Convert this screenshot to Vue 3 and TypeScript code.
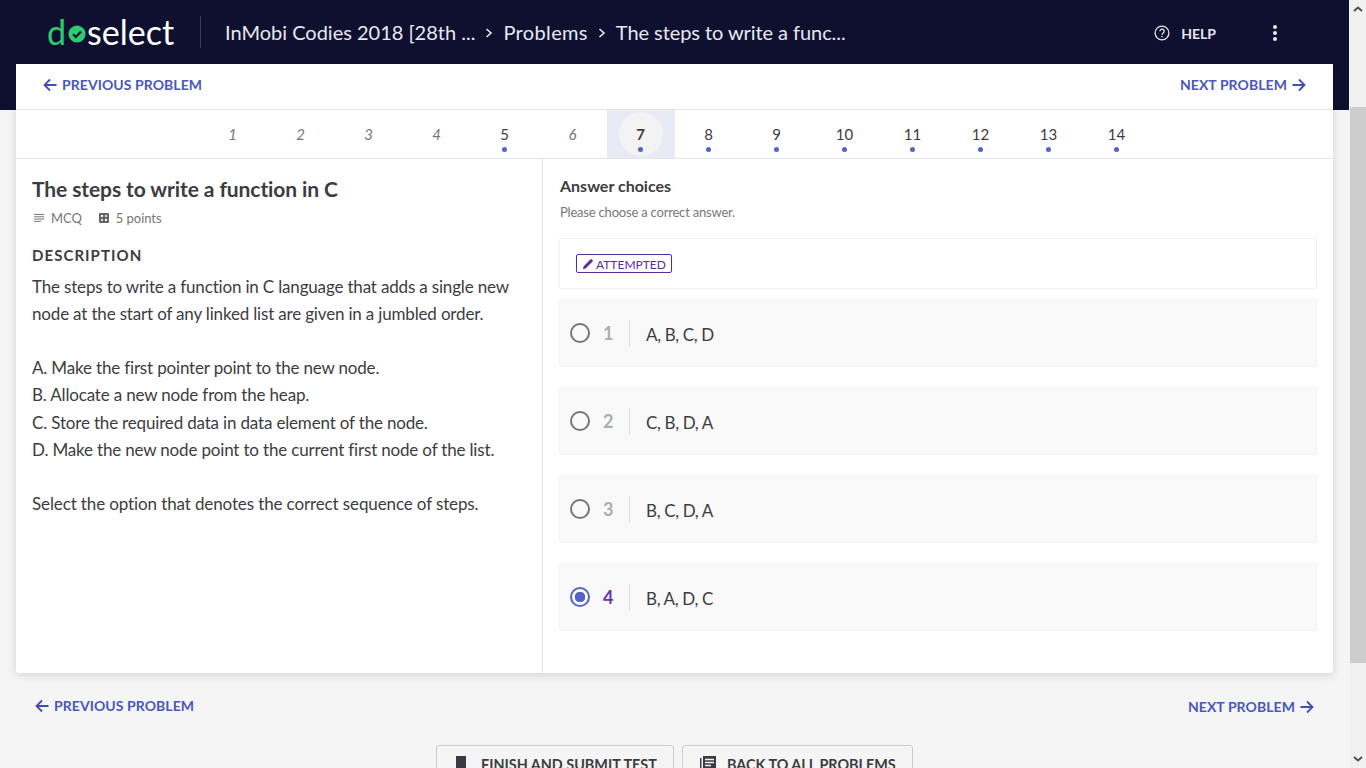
<template>
  <div class="page">
    <div class="viewport">
      <header class="topbar">
        <div class="logo">
          <span class="logo-d">d</span>
          <svg class="logo-o" viewBox="0 0 20 20" width="18" height="18">
            <circle cx="10" cy="10" r="9.5" fill="#2ecc71" />
            <path d="M5.6 10.2l3.1 3.1 5.8-6.2" fill="none" stroke="#0f1030" stroke-width="2.4" />
          </svg>
          <span class="logo-rest">select</span>
        </div>
        <div class="crumbs">
          <span>InMobi Codies 2018 [28th ...</span>
          <svg class="crumb-sep" viewBox="0 0 10 12" width="10" height="12"><path d="M2.5 2l4.5 4-4.5 4" fill="none" stroke="#e8e8f0" stroke-width="1.6" /></svg>
          <span class="crumb-mid">Problems</span>
          <svg class="crumb-sep" viewBox="0 0 10 12" width="10" height="12"><path d="M2.5 2l4.5 4-4.5 4" fill="none" stroke="#e8e8f0" stroke-width="1.6" /></svg>
          <span class="crumb-last">The steps to write a func...</span>
        </div>
        <div class="help">
          <svg viewBox="0 0 16 16" width="16" height="16">
            <circle cx="8" cy="8" r="6.9" fill="none" stroke="#e8e8f0" stroke-width="1.3" />
            <path d="M5.9 6.3a2.1 2.1 0 1 1 3.3 1.7c-.8.5-1.2.9-1.2 1.8" fill="none" stroke="#e8e8f0" stroke-width="1.3" />
            <rect x="7.3" y="10.9" width="1.4" height="1.4" fill="#e8e8f0" />
          </svg>
          <span>HELP</span>
        </div>
        <div class="kebab"><i></i><i></i><i></i></div>
      </header>

      <section class="card">
        <div class="problem-nav">
          <a class="nav-link">
            <svg class="arrow" viewBox="0 0 14 14" width="14" height="14"><path d="M13.5 7H1.5M7 1.5L1.5 7 7 12.5" fill="none" stroke="currentColor" stroke-width="1.8" /></svg>
            PREVIOUS PROBLEM
          </a>
          <a class="nav-link">
            NEXT PROBLEM
            <svg class="arrow" viewBox="0 0 14 14" width="14" height="14"><path d="M.5 7h12M7 1.5L12.5 7 7 12.5" fill="none" stroke="currentColor" stroke-width="1.8" /></svg>
          </a>
        </div>

        <div class="numbers">
          <div
            v-for="n in problemNumbers"
            :key="n"
            class="num"
            :class="{ done: attempted.includes(n), active: n === current }"
          >
            <span class="num-label">{{ n }}</span>
            <i v-if="attempted.includes(n)" class="dot"></i>
          </div>
        </div>

        <div class="columns">
          <div class="left">
            <h1>The steps to write a function in C</h1>
            <div class="meta">
              <span class="meta-item">
                <svg viewBox="0 0 10 8" width="10" height="8"><path d="M0 .5h10M0 2.8h10M0 5.1h10M0 7.4h7" stroke="#777" stroke-width="1" /></svg>
                MCQ
              </span>
              <span class="meta-item">
                <svg viewBox="0 0 10 10" width="10" height="10">
                  <rect width="10" height="10" rx="1" fill="#666" />
                  <rect x="2" y="2" width="2" height="2" fill="#fff" />
                  <rect x="6" y="2" width="2" height="2" fill="#ddd" />
                  <rect x="2" y="6" width="2" height="2" fill="#ddd" />
                  <rect x="6" y="6" width="2" height="2" fill="#fff" />
                </svg>
                5 points
              </span>
            </div>
            <h2>DESCRIPTION</h2>
            <p>The steps to write a function in C language that adds a single new node at the start of any linked list are given in a jumbled order.</p>
            <p class="spaced">
              A. Make the first pointer point to the new node.<br />
              B. Allocate a new node from the heap.<br />
              C. Store the required data in data element of the node.<br />
              D. Make the new node point to the current first node of the list.
            </p>
            <p class="spaced last">Select the option that denotes the correct sequence of steps.</p>
          </div>

          <div class="right">
            <h3>Answer choices</h3>
            <div class="hint">Please choose a correct answer.</div>
            <div class="status">
              <span class="badge">
                <svg viewBox="0 0 10 10" width="10" height="10"><path d="M0 10l.5-2.6L6.8 1.1 8.9 3.2 2.6 9.5zM7.5.4L8.3 0 10 1.7l-.4.8-.7.7-2.1-2.1z" fill="#5a2ca0" /></svg>
                <span class="badge-label">ATTEMPTED</span>
              </span>
            </div>
            <div
              v-for="opt in options"
              :key="opt.id"
              class="option"
              :class="{ selected: opt.id === selected }"
            >
              <span class="radio"></span>
              <span class="opt-num">{{ opt.id }}</span>
              <span class="opt-text">{{ opt.text }}</span>
            </div>
          </div>
        </div>
      </section>

      <div class="bottom-nav">
        <a class="nav-link">
          <svg class="arrow" viewBox="0 0 14 14" width="14" height="14"><path d="M13.5 7H1.5M7 1.5L1.5 7 7 12.5" fill="none" stroke="currentColor" stroke-width="1.8" /></svg>
          PREVIOUS PROBLEM
        </a>
        <a class="nav-link next">
          NEXT PROBLEM
          <svg class="arrow" viewBox="0 0 14 14" width="14" height="14"><path d="M.5 7h12M7 1.5L12.5 7 7 12.5" fill="none" stroke="currentColor" stroke-width="1.8" /></svg>
        </a>
      </div>

      <div class="actions">
        <button class="action finish">
          <svg viewBox="0 0 10 16" width="10" height="16"><rect width="10" height="16" fill="#3a3a44" /></svg>
          FINISH AND SUBMIT TEST
        </button>
        <button class="action back">
          <svg viewBox="0 0 16 16" width="16" height="16">
            <rect x="0" y="2" width="1.5" height="14" fill="#3a3a44" />
            <rect x="3" y="0" width="13" height="16" fill="#3a3a44" />
            <path d="M5 3.5h9M5 6.5h9M5 9.5h6" stroke="#f5f5f5" stroke-width="1.3" />
          </svg>
          BACK TO ALL PROBLEMS
        </button>
      </div>
    </div>

    <div class="scrollbar">
      <svg class="sb-arrow" viewBox="0 0 10 6" width="10" height="6"><path d="M1 5l4-3.5L9 5" fill="none" stroke="#505050" stroke-width="2" /></svg>
      <div class="sb-track"><div class="sb-thumb"></div></div>
      <svg class="sb-arrow" viewBox="0 0 10 6" width="10" height="6"><path d="M1 1l4 3.5L9 1" fill="none" stroke="#505050" stroke-width="2" /></svg>
    </div>
  </div>
</template>

<script setup lang="ts">
const problemNumbers: number[] = Array.from({ length: 14 }, (_, i) => i + 1);
const attempted: number[] = [5, 7, 8, 9, 10, 11, 12, 13, 14];
const current = 7;
const selected = 4;

const options = [
  { id: 1, text: "A, B, C, D" },
  { id: 2, text: "C, B, D, A" },
  { id: 3, text: "B, C, D, A" },
  { id: 4, text: "B, A, D, C" },
];
</script>

<style>
html,
body {
  margin: 0;
  overflow: hidden;
}
</style>

<style scoped>
.page {
  display: flex;
  height: 768px;
  overflow: hidden;
  background: #f5f5f5;
  font-family: Lato, "Liberation Sans", sans-serif;
  color: #3c3c3f;
}

.viewport {
  flex: 1;
  min-width: 0;
}

/* Header band runs behind the top of the card */
.topbar {
  display: flex;
  align-items: flex-start;
  height: 110px;
  margin-bottom: -46px;
  padding: 16px 0 0 47px;
  box-sizing: border-box;
  background: #0f1030;
  color: #e8e8f0;
}

.logo {
  display: flex;
  align-items: center;
  width: 153px;
  height: 32px;
  border-right: 1px solid #3c3d58;
  font-size: 34px;
  line-height: 26px;
  color: #fff;
}

.logo-d {
  color: #2ecc71;
}

.logo-o {
  margin: 3px 1px 0 2px;
}

.crumbs {
  display: flex;
  align-items: center;
  gap: 9px;
  height: 32px;
  margin-left: 24px;
  font-size: 20px;
}

.crumbs .crumb-sep {
  margin-top: 1px;
}

.crumb-mid {
  letter-spacing: 0.35px;
}

.crumb-last {
  letter-spacing: -0.07px;
}

.help {
  display: flex;
  align-items: center;
  gap: 11px;
  height: 34px;
  margin-left: auto;
  font-size: 14px;
  font-weight: 700;
}

.kebab {
  display: flex;
  flex-direction: column;
  align-items: center;
  justify-content: center;
  gap: 2px;
  width: 4px;
  height: 34px;
  margin: 0 72px 0 57px;
}

.kebab i {
  width: 4px;
  height: 4px;
  border-radius: 50%;
  background: #e8e8f0;
}

.card {
  position: relative;
  margin: 0 16px;
  background: #fff;
  border-radius: 0 0 3px 3px;
  box-shadow: 0 2px 10px rgba(0, 0, 0, 0.14);
}

.problem-nav {
  display: flex;
  align-items: center;
  justify-content: space-between;
  height: 46px;
  padding: 0 27px 4px;
  box-sizing: border-box;
  border-bottom: 1px solid #e5e5e5;
}

.nav-link {
  display: flex;
  align-items: center;
  gap: 5px;
  font-size: 14px;
  font-weight: 700;
  letter-spacing: 0.07px;
  color: #4a57bb;
}

.arrow {
  color: #3f4db5;
}

.numbers {
  display: flex;
  justify-content: center;
  height: 48px;
  border-bottom: 1px solid #e5e5e5;
}

.num {
  position: relative;
  display: flex;
  flex-direction: column;
  align-items: center;
  width: 68px;
  padding-top: 15px;
  box-sizing: border-box;
  font-size: 15px;
  line-height: 19px;
  font-style: italic;
  color: #777;
}

.num.done {
  font-style: normal;
  color: #3c3c3f;
}

.num.active {
  background: #e8ebf6;
  font-weight: 700;
}

/* Round highlight behind the current number */
.num.active::before {
  content: "";
  position: absolute;
  top: 2px;
  left: 12px;
  width: 44px;
  height: 44px;
  border-radius: 50%;
  background: #f3f3f3;
}

.num-label,
.dot {
  position: relative;
}

.dot {
  width: 5px;
  height: 5px;
  margin-top: 3px;
  border-radius: 50%;
  background: #5462c4;
}

.columns {
  display: flex;
  height: 514px;
}

.left {
  width: 527px;
  padding: 17px 16px 0;
  box-sizing: border-box;
  border-right: 1px solid #e5e5e5;
}

h1 {
  margin: 0;
  font-size: 21px;
  font-weight: 700;
  letter-spacing: -0.09px;
  line-height: 26px;
}

.meta {
  display: flex;
  gap: 15px;
  margin-top: 7px;
  font-size: 13px;
  line-height: 18px;
  letter-spacing: -0.05px;
  color: #777;
}

.meta-item {
  display: flex;
  align-items: center;
  gap: 7px;
}

.meta-item svg {
  margin-left: 2px;
}

h2 {
  margin: 18px 0 0;
  font-size: 15px;
  font-weight: 700;
  letter-spacing: 1.05px;
  line-height: 20px;
}

.left p {
  margin: 7.6px 0 0;
  font-size: 17px;
  line-height: 27.2px;
  letter-spacing: -0.17px;
}

.left p.spaced {
  margin-top: 27.2px;
}

.left p.last {
  letter-spacing: -0.12px;
}

.right {
  flex: 1;
  padding: 17px 16px 0;
}

h3 {
  margin: 0 0 0 1px;
  font-size: 16px;
  font-weight: 700;
  line-height: 20px;
}

.hint {
  margin: 7px 0 0 1px;
  font-size: 13px;
  line-height: 18px;
  letter-spacing: -0.2px;
  color: #777;
}

.status {
  display: flex;
  align-items: center;
  height: 49px;
  margin-top: 17px;
  padding-left: 16px;
  border: 1px solid #f2f2f2;
  border-radius: 2px;
}

.badge {
  display: flex;
  align-items: center;
  gap: 3px;
  height: 17px;
  padding: 0 5px 0 6px;
  border: 1px solid #5a2ca0;
  border-radius: 2px;
  font-size: 12px;
  color: #5a2ca0;
}

.badge-label {
  padding-top: 1px;
}

.option {
  display: flex;
  align-items: center;
  height: 66px;
  margin-top: 10px;
  margin-bottom: 20px;
  padding-left: 10px;
  border: 1px solid #f4f4f4;
  border-radius: 2px;
  background: #f9f9f9;
}

.option + .option {
  margin-top: 0;
}

.radio {
  box-sizing: border-box;
  width: 20px;
  height: 20px;
  border: 2px solid #777;
  border-radius: 50%;
}

.opt-num {
  width: 20px;
  margin-left: 13px;
  font-size: 18px;
  font-weight: 700;
  color: #aab0a8;
}

.opt-text {
  display: block;
  height: 27px;
  margin-left: 6px;
  padding-left: 16px;
  border-left: 1px solid #ddd;
  font-size: 17px;
  line-height: 30px;
  letter-spacing: -0.35px;
}

.selected .radio {
  border-color: #5564c4;
  background: radial-gradient(circle, #5564c4 0 5px, transparent 5.5px);
}

.selected .opt-num {
  color: #6a33b0;
}

.bottom-nav {
  display: flex;
  justify-content: space-between;
  margin-top: 23px;
  padding: 0 35px;
}

.bottom-nav .next {
  margin-top: 2px;
}

.actions {
  display: flex;
  justify-content: center;
  gap: 8px;
  margin-top: 30px;
}

.action {
  display: flex;
  align-items: flex-start;
  box-sizing: border-box;
  height: 50px;
  padding: 10px 0 0;
  border: 1px solid #ccc;
  border-radius: 3px;
  background: #f5f5f5;
  font-family: inherit;
  font-size: 14.4px;
  font-weight: 700;
  color: #3c3c3f;
  white-space: nowrap;
}

.finish {
  gap: 15px;
  width: 238px;
  padding-left: 19px;
}

.back {
  gap: 11px;
  width: 231px;
  padding-left: 17px;
}

.scrollbar {
  display: flex;
  flex-direction: column;
  align-items: center;
  width: 17px;
  border-left: 1px solid #f8f8f8;
  box-sizing: border-box;
  background: #f0f0f0;
}

.sb-arrow {
  flex: none;
  margin: 6px 0;
}

.sb-track {
  flex: 1;
  width: 100%;
}

.sb-thumb {
  height: 556px;
  margin-top: 89px;
  background: #cdcdcd;
}
</style>
